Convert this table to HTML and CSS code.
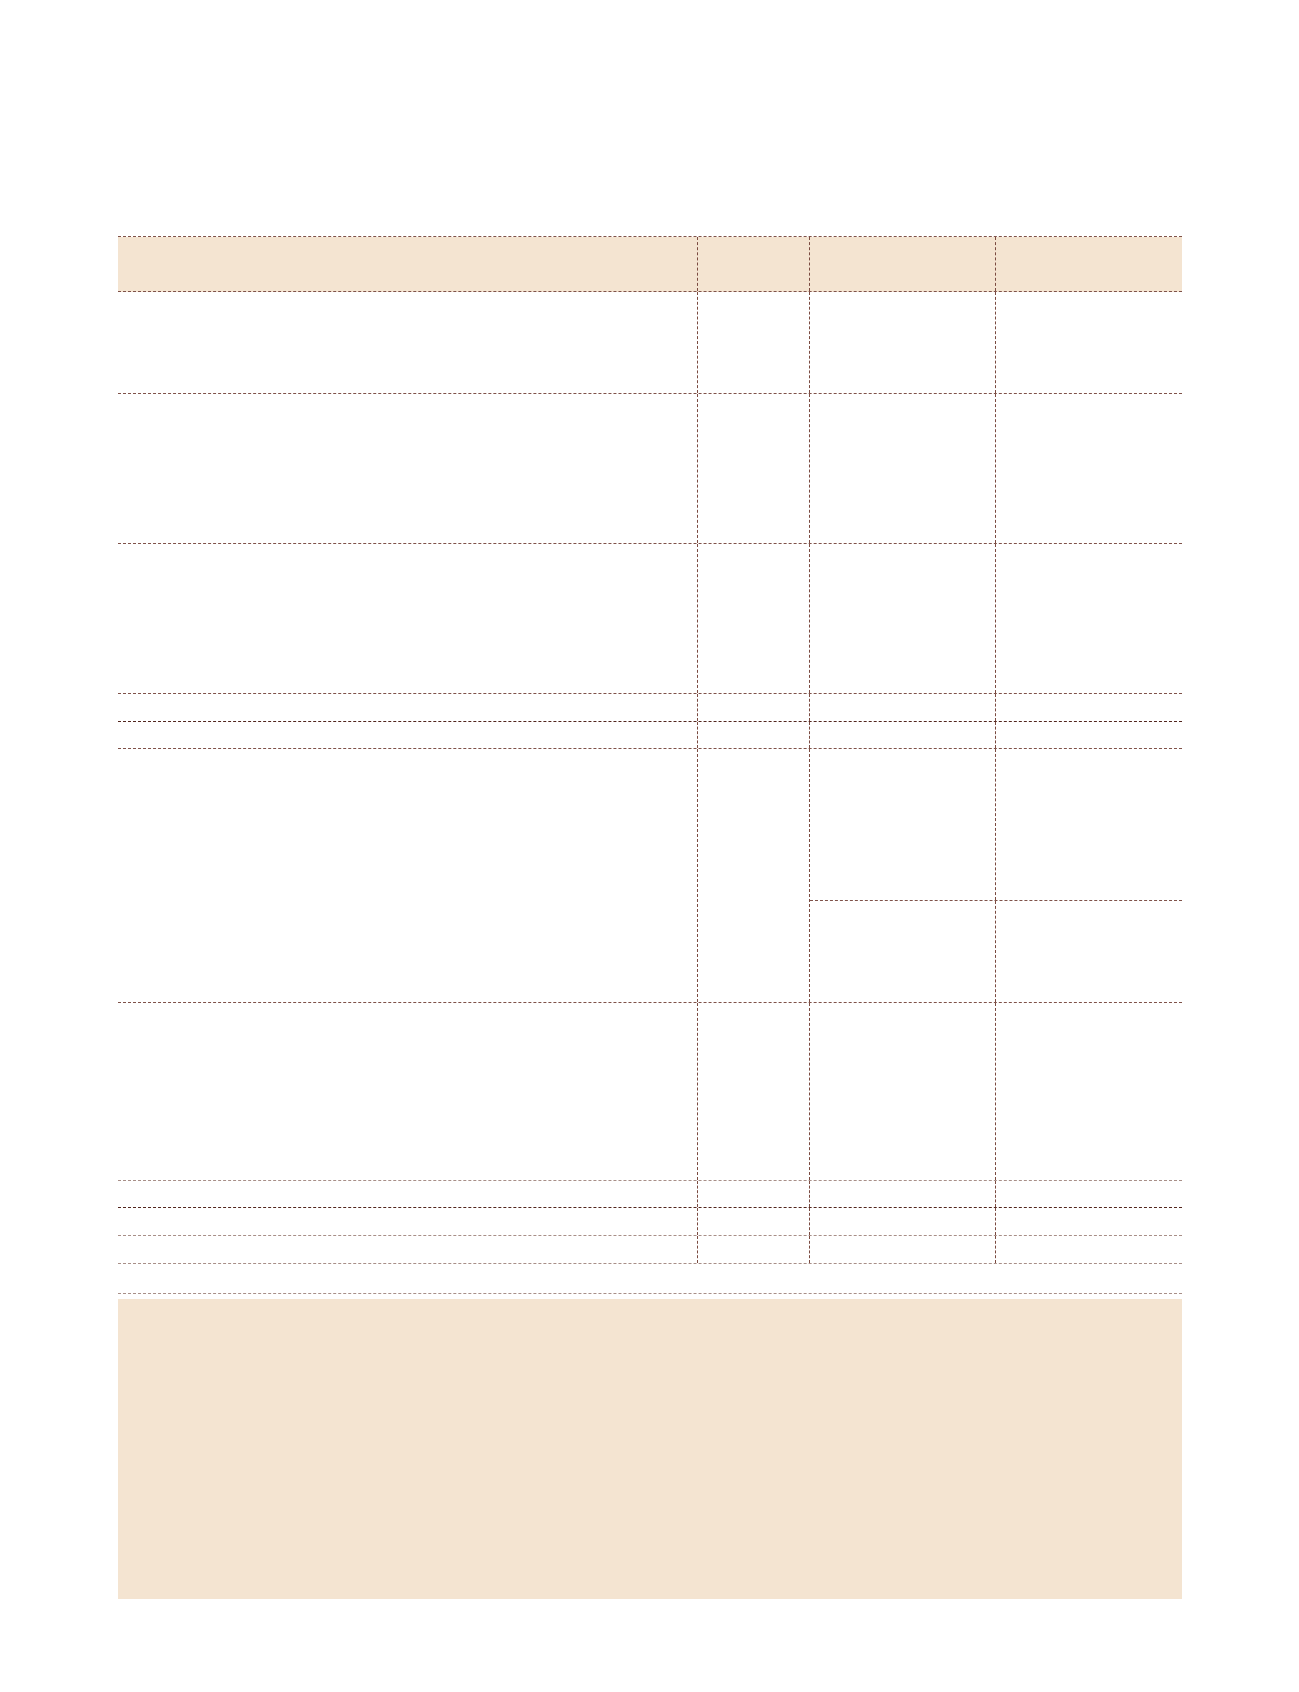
FILE: index.html
```html
<!DOCTYPE html>
<html>
<head>
<meta charset="utf-8">
<link rel="stylesheet" href="styles.css">
</head>
<body>
<div class="page">
  <div class="tbl">
    <div class="row head h55"><div class="c"></div><div class="c"></div><div class="c"></div><div class="c"></div></div>
    <div class="row h102"><div class="c"></div><div class="c"></div><div class="c"></div><div class="c"></div></div>
    <div class="row h150"><div class="c"></div><div class="c"></div><div class="c"></div><div class="c"></div></div>
    <div class="row h150"><div class="c"></div><div class="c"></div><div class="c"></div><div class="c"></div></div>
    <div class="row h28 dark"><div class="c"></div><div class="c"></div><div class="c"></div><div class="c"></div></div>
    <div class="row h27"><div class="c"></div><div class="c"></div><div class="c"></div><div class="c"></div></div>
    <div class="row h254">
      <div class="c"></div><div class="c"></div>
      <div class="split">
        <div class="sub h152"><div class="c"></div><div class="c"></div></div>
        <div class="sub last"><div class="c"></div><div class="c"></div></div>
      </div>
    </div>
    <div class="row h178 light"><div class="c"></div><div class="c"></div><div class="c"></div><div class="c"></div></div>
    <div class="row h27 dark"><div class="c"></div><div class="c"></div><div class="c"></div><div class="c"></div></div>
    <div class="row h28 light"><div class="c"></div><div class="c"></div><div class="c"></div><div class="c"></div></div>
    <div class="row h28 light"><div class="c"></div><div class="c"></div><div class="c"></div><div class="c"></div></div>
    <div class="row h30 light full"></div>
  </div>
  <div class="note"></div>
</div>
</body>
</html>
```
FILE: styles.css
```css
html, body {
  margin: 0;
  padding: 0;
  background: #ffffff;
  font-family: "Liberation Sans", Arial, sans-serif;
}
.page {
  padding: 236px 0 0 118px;
  width: 1064px;
}
.tbl {
  width: 1064px;
  border-top: 1px dashed #7f5249;
}
.row {
  display: grid;
  grid-template-columns: 580px 112px 186px 186px;
  box-sizing: border-box;
  border-bottom: 1px dashed #7f5249;
}
.row.dark { border-bottom-color: #52261e; }
.row.light { border-bottom-color: #a88f88; }
.row.head { background: #f4e4d1; }
.row.full { display: block; }
.c {
  box-sizing: border-box;
  border-right: 1px dashed #7a4a40;
}
.row > .c:last-child,
.sub > .c:last-child { border-right: none; }
.split {
  grid-column: span 2;
  display: flex;
  flex-direction: column;
}
.sub {
  display: grid;
  grid-template-columns: 186px 186px;
  box-sizing: border-box;
  border-bottom: 1px dashed #7f5249;
}
.sub.last { border-bottom: none; flex: 1; }
.h27 { height: 27px; }
.h28 { height: 28px; }
.h30 { height: 30px; }
.h55 { height: 55px; }
.h102 { height: 102px; }
.h150 { height: 150px; }
.h152 { height: 152px; }
.h178 { height: 178px; }
.h254 { height: 254px; }
.note {
  margin-top: 5px;
  height: 300px;
  background: #f4e4d1;
}
```
